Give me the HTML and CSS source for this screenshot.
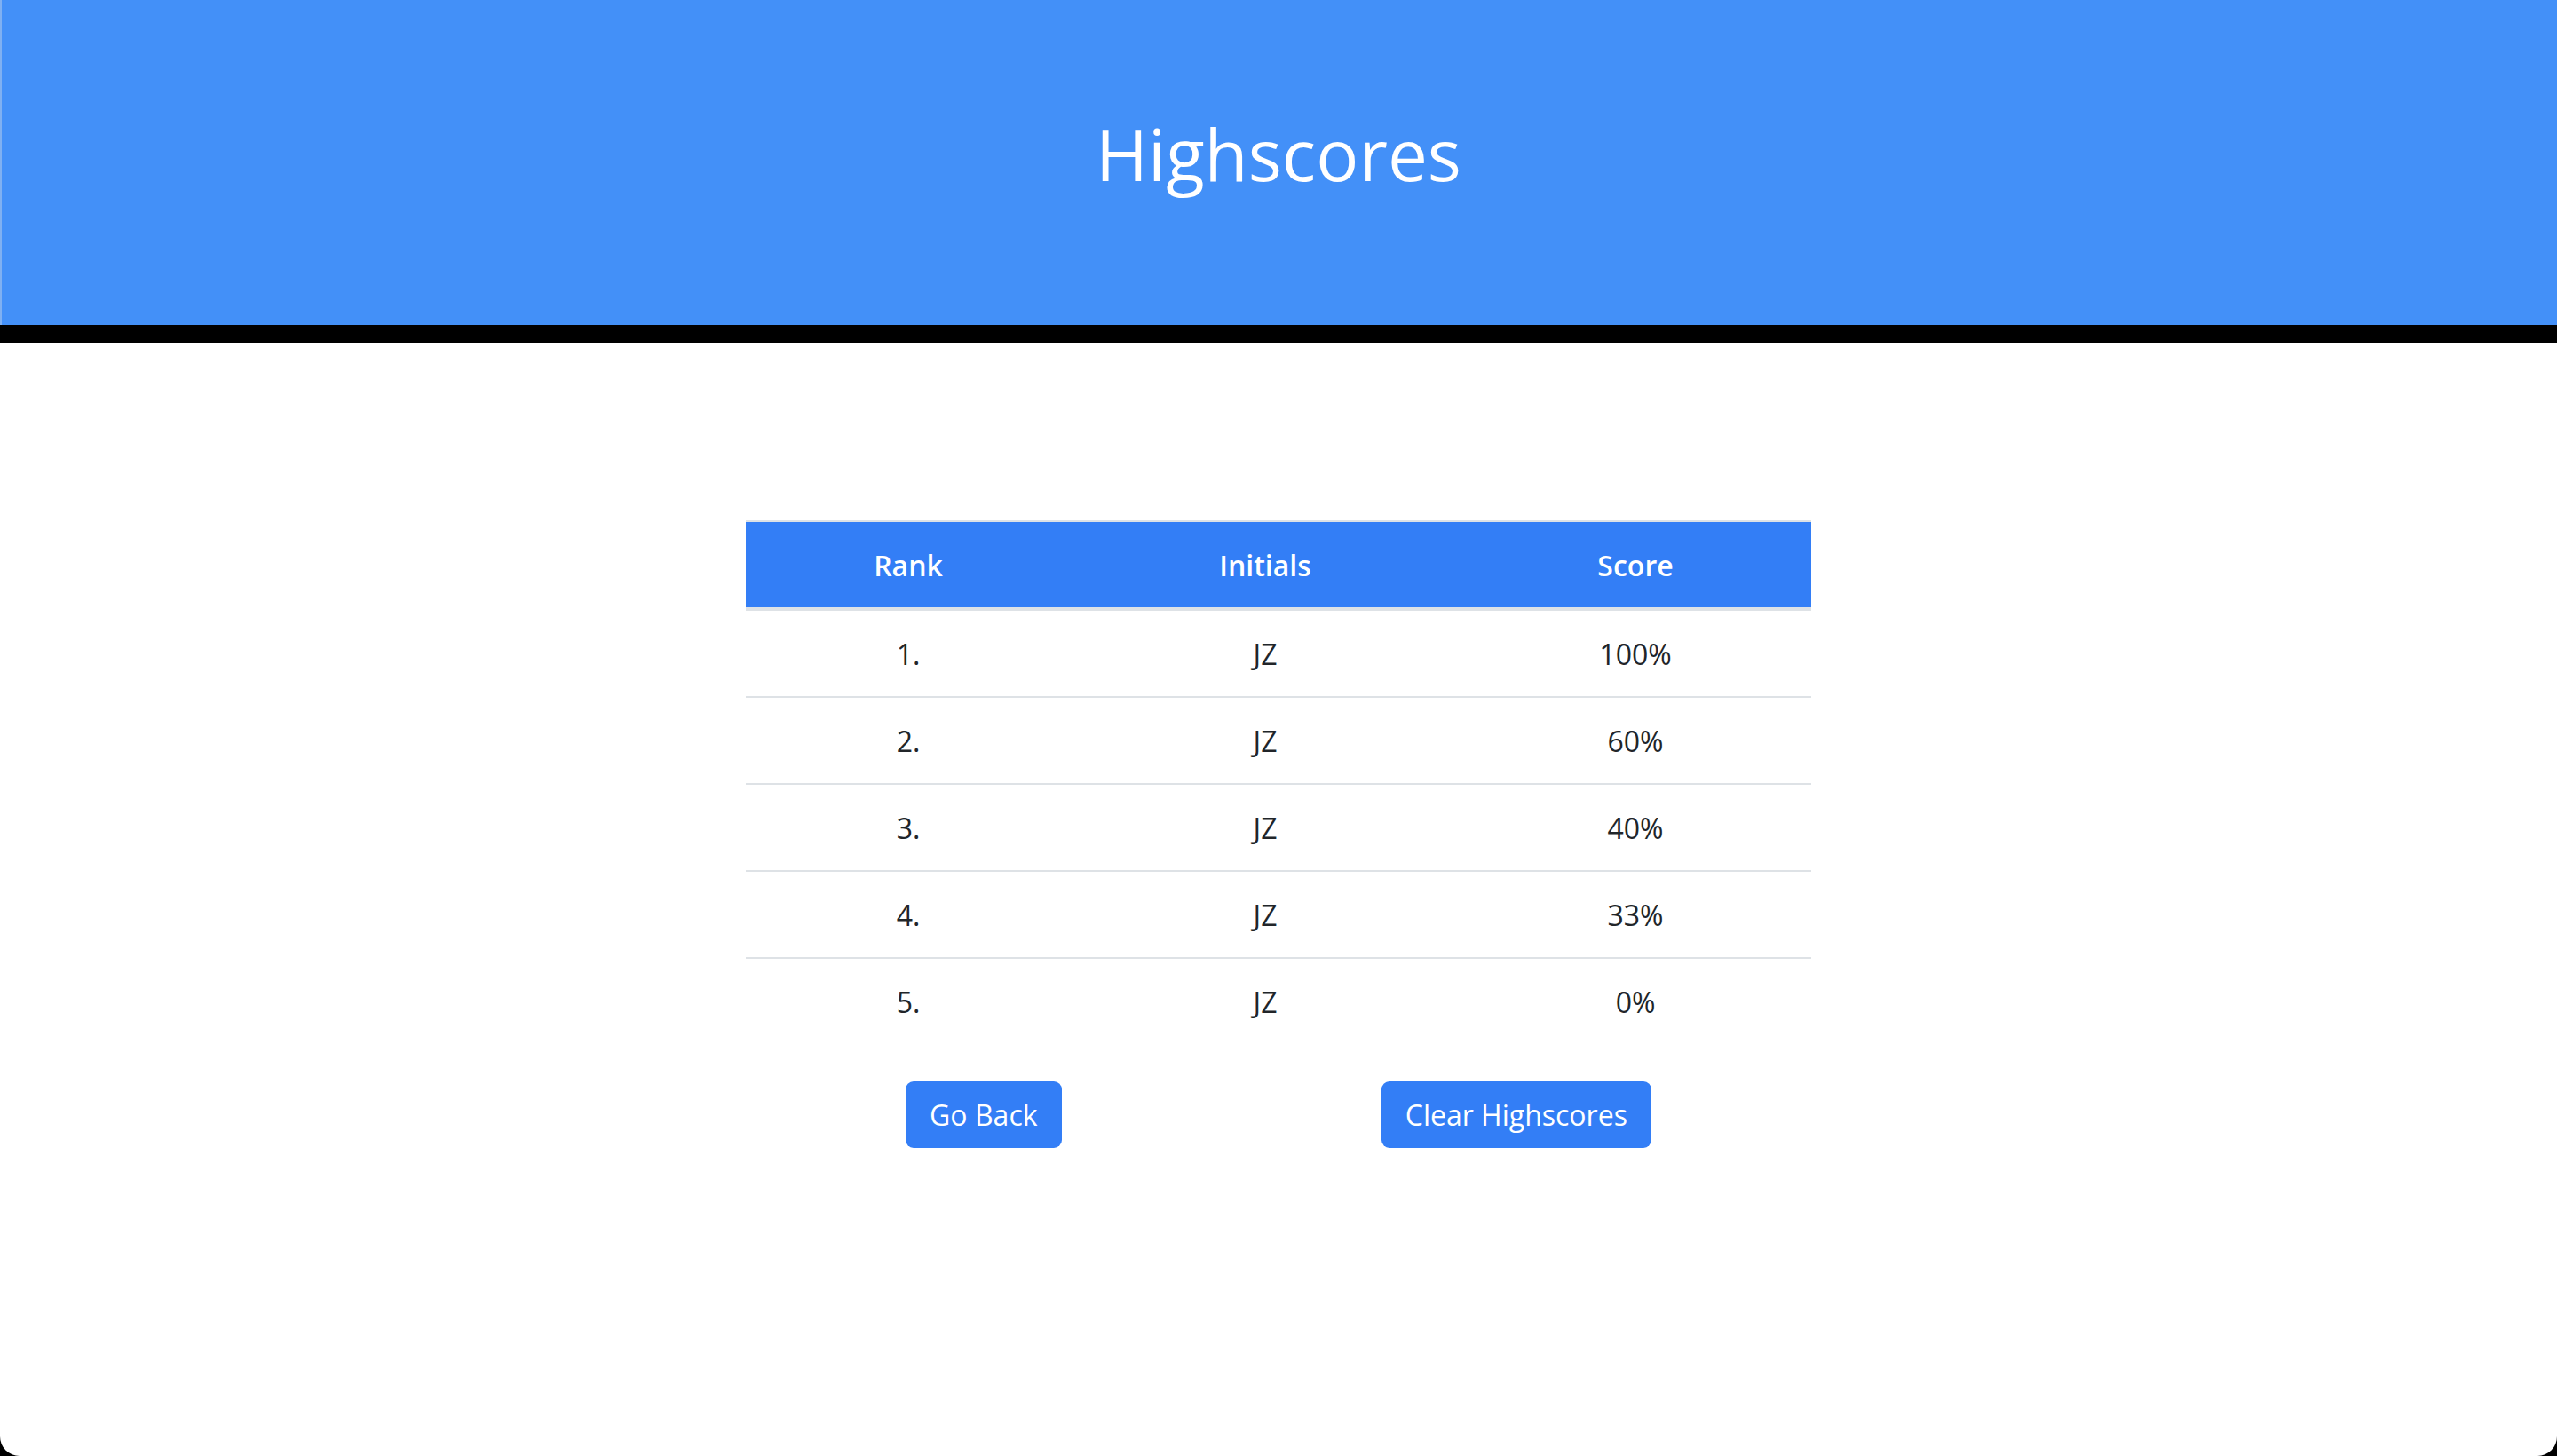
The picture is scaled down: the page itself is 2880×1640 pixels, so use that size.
FILE: index.html
```html
<!DOCTYPE html>
<html lang="en">
<head>
<meta charset="utf-8">
<title>Highscores</title>
<link rel="stylesheet" href="styles.css">
</head>
<body>
<div class="page">
  <header class="banner">
    <h1 class="title">Highscores</h1>
  </header>
  <main class="content">
    <table class="scores">
      <colgroup>
        <col class="col-rank">
        <col class="col-initials">
        <col class="col-score">
      </colgroup>
      <thead>
        <tr><th>Rank</th><th>Initials</th><th>Score</th></tr>
      </thead>
      <tbody>
        <tr><td>1.</td><td>JZ</td><td>100%</td></tr>
        <tr><td>2.</td><td>JZ</td><td>60%</td></tr>
        <tr><td>3.</td><td>JZ</td><td>40%</td></tr>
        <tr><td>4.</td><td>JZ</td><td>33%</td></tr>
        <tr><td>5.</td><td>JZ</td><td>0%</td></tr>
      </tbody>
    </table>
    <div class="actions">
      <button class="btn" type="button">Go Back</button>
      <button class="btn" type="button">Clear Highscores</button>
    </div>
  </main>
</div>
</body>
</html>
```

FILE: styles.css
```css
html {
  background: #000;
}
body {
  margin: 0;
  font-family: "Open Sans", "Liberation Sans", sans-serif;
  color: #212529;
}
.page {
  min-height: 1640px;
  background: #fff;
  border-radius: 0 0 22px 22px;
  overflow: hidden;
}
.banner {
  box-sizing: border-box;
  height: 386px;
  background: #4390f8;
  border-bottom: 20px solid #000;
  box-shadow: inset 2px 0 0 #7fb0f2;
  padding-top: 118px;
  text-align: center;
}
.title {
  margin: 0;
  font-size: 80px;
  font-weight: 400;
  line-height: normal;
  color: #fff;
}
.content {
  display: flex;
  flex-direction: column;
  align-items: center;
  padding-top: 200px;
}
.scores {
  width: 1200px;
  table-layout: fixed;
  border-collapse: collapse;
  font-size: 32px;
  line-height: 48px;
  text-align: center;
}
.col-rank { width: 366px; }
.col-initials { width: 438px; }
.col-score { width: 396px; }
.scores th {
  background: #337ef6;
  color: #fff;
  font-weight: 600;
  padding: 25px 24px 23px;
  border-top: 2px solid #dee2e6;
  border-bottom: 4px solid #dee2e6;
}
.scores td {
  padding: 25px 24px 23px;
  border-top: 2px solid #dee2e6;
  font-weight: 400;
}
.actions {
  width: 1200px;
  display: flex;
  justify-content: space-around;
  margin-top: 42px;
}
.btn {
  height: 75px;
  padding: 0 27px;
  border: none;
  border-radius: 9px;
  background: #337ef6;
  color: #fff;
  font-family: "Open Sans", "Liberation Sans", sans-serif;
  font-size: 32px;
  line-height: 48px;
}
```
